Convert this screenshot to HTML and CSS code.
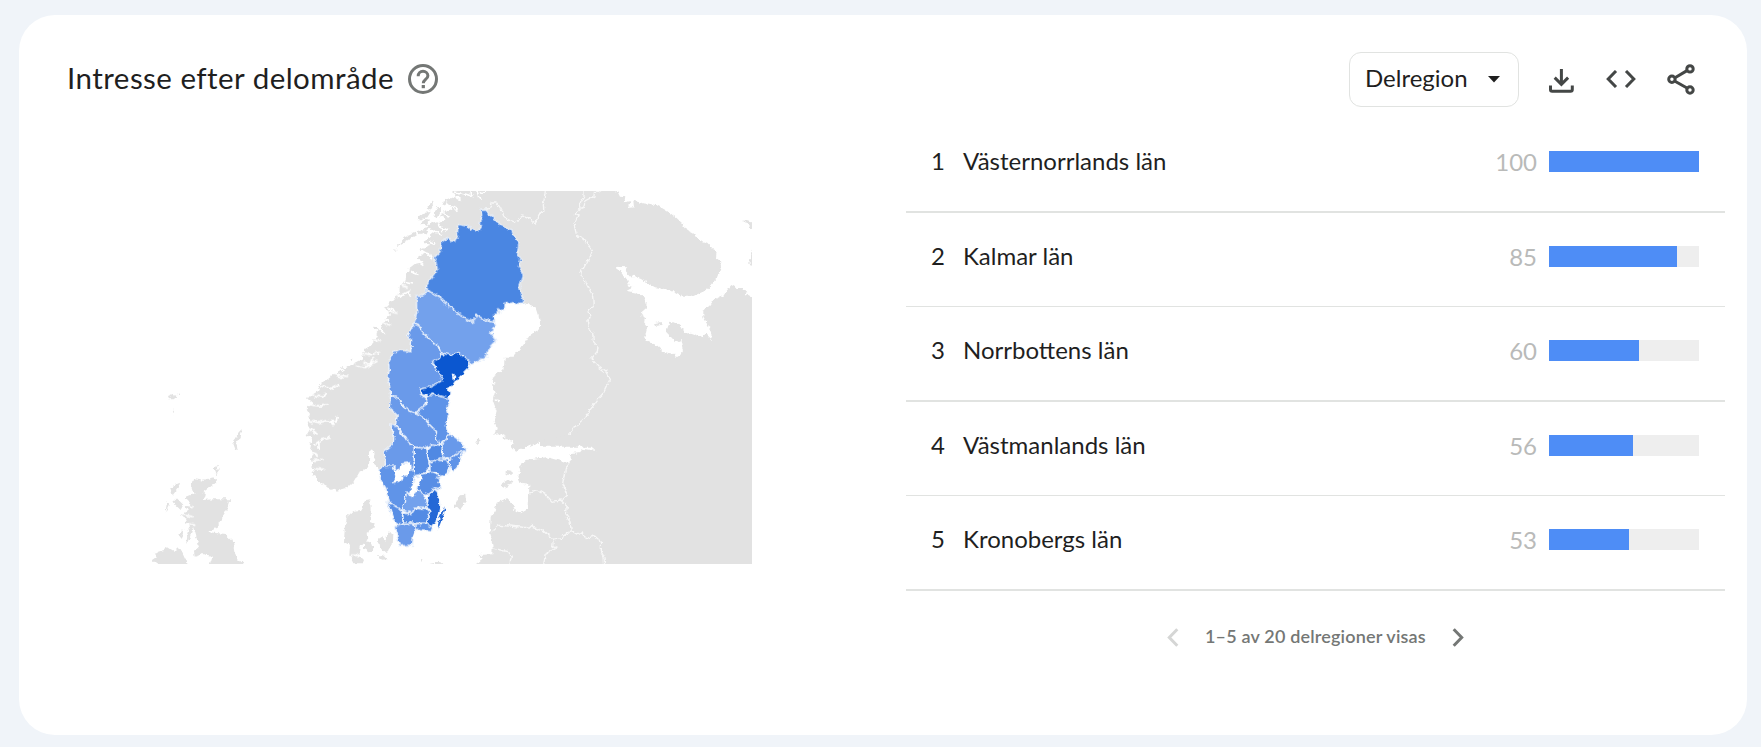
FILE: index.html
```html
<!DOCTYPE html>
<html lang="sv">
<head>
<meta charset="utf-8">
<title>Intresse efter delområde</title>
<link rel="stylesheet" href="styles.css">
</head>
<body>
<main class="card">
  <header class="header">
    <h1 class="title">Intresse efter delområde</h1>
    <svg class="help" viewBox="0 0 30 30"><circle cx="15" cy="15" r="13.5" fill="none" stroke="#747775" stroke-width="3"/><path d="M10.2 12.2C10.2 8.9 12.4 7.3 15 7.3s4.9 1.8 4.9 4.4c0 3.6-4.6 3.9-4.6 7.5" fill="none" stroke="#747775" stroke-width="3"/><rect x="13.7" y="21" width="3.2" height="3.2" fill="#747775"/></svg>
    <div class="select"><span class="select-text">Delregion</span><svg class="caret" viewBox="0 0 12 7"><path d="M0 0H12L6 6.5Z" fill="#1f1f1f"/></svg></div>
    <svg class="download" viewBox="0 0 25 25"><path d="M12.4 0V15M5.7 8.6L12.4 15.3L19.1 8.6M1.5 16.5V20.5Q1.5 22.2 3.2 22.2H21.6Q23.3 22.2 23.3 20.5V16.5" fill="none" stroke="#444746" stroke-width="3"/></svg>
    <svg class="code" viewBox="0 0 30 18"><path d="M10 1L2.2 9L10 17M20 1L27.8 9L20 17" fill="none" stroke="#444746" stroke-width="3"/></svg>
    <svg class="share" viewBox="0 0 28 31"><g fill="none" stroke="#444746" stroke-width="3"><path d="M8 13.8L20 6.6M8 17.2L20 24"/><circle cx="4.9" cy="15.3" r="3.2"/><circle cx="23" cy="4.9" r="3.2"/><circle cx="23" cy="26" r="3.2"/></g></svg>
  </header>
  <div class="content">
    <div class="map-pane">
      <svg class="map" viewBox="150 190 604 376">
        <defs>
          <clipPath id="frame"><rect x="150" y="191.5" width="601.6" height="371.8"/></clipPath>
          <filter id="coast" x="-5%" y="-5%" width="110%" height="110%" color-interpolation-filters="sRGB"><feTurbulence type="fractalNoise" baseFrequency=".22" numOctaves="3" seed="4"/><feDisplacementMap in="SourceGraphic" scale="5" xChannelSelector="R" yChannelSelector="G"/></filter>
        </defs>
        <g clip-path="url(#frame)"><g filter="url(#coast)"><g transform="scale(.33333)">
          <!-- mainland and islands -->
          <g fill="#e2e2e2">
            <g transform="translate(1140 540)">
              <path d="M215 0L215 36 232 46 200 58 203 72 218 88 196 92 180 108 197 118 172 132 158 122 143 142 168 152 148 168 132 188 152 194 120 206 136 218 108 236 132 246 104 252 84 268 94 284 74 304 64 332 48 346 58 356 34 364 20 384 30 402 14 422 8 440 -10 455V610H60V560L150 400 400 340 435 370 470 385 475 400 482 445 450 465 430 495 385 550 350 610H705V0Z"/>
              <path d="M160 60L162 80 146 92 140 84ZM135 98L152 96 142 112 125 118 108 118ZM45 213L60 184 74 172 92 164 104 158 110 164 84 180 62 192ZM110 154L130 148 152 136 140 160 116 166ZM172 82L184 80 178 104 166 116 160 104ZM190 62L202 58 194 80 184 76ZM118 130L134 120 150 122 140 138Z"/>
            </g>
            <g transform="translate(870 540)"><path d="M400 250L384 262 362 262 346 290 350 306 330 314 328 340 312 352 318 376 298 392 304 416 280 428 270 450 272 466 250 476 250 492 226 506 216 518 220 536 190 552 176 562 192 570 152 584 130 594 120 606 100 640H360V400Z"/><path d="M284 384L294 378 290 388ZM252 440L266 442 256 450ZM182 538L188 536 184 548ZM150 562L160 558 156 568ZM312 212L318 210 314 216Z"/></g>
            <g transform="translate(420 1110)">
              <path d="M630 -15L600 6 572 18 552 34 534 46 540 60 516 74 504 88 518 100 500 116 510 132 500 160 510 178 500 194 516 206 508 228 520 244 510 266 520 280 516 296 522 318 538 338 560 350 590 362 620 354 640 336 656 308 682 294 690 280 686 246 696 238 704 262 700 280 714 292 728 308 737 290 800 200 780 -15Z"/>
              <path d="M620 440L642 422 660 420 678 390 691 388 692 430 690 456 704 462 700 478 680 488 682 510 662 530 658 556 672 570 668 580 640 580 628 556 630 524 612 514 614 474ZM672 514L692 516 700 540 688 548 672 538ZM714 508L730 498 734 516 746 484 760 492 758 524 744 536 738 550 718 532ZM708 556L732 556 746 570 726 572Z"/>
              <path d="M162 328L190 332 228 324 226 340 190 366 198 374 188 390 224 388 270 388 268 406 252 436 236 456 236 472 204 486 232 490 256 492 278 512 284 548 296 570 310 580V620H210V578L216 558 190 552 164 560 162 546 176 526 166 490 160 470 142 480 152 458 130 462 140 446 120 436 144 424 134 406 150 404 136 382 166 370 152 360ZM50 620L56 584 36 570 50 560 44 548 72 540 84 532 100 542 120 534 130 552 142 578V620ZM92 358L106 344 120 338 116 352 98 376ZM100 392L110 384 118 392 130 404 122 420 106 404ZM82 390L88 404 76 428ZM154 456L164 454 150 500 138 526 142 498ZM112 496L130 480 122 510ZM276 216L290 198 300 182 306 178 302 202 288 212 292 236 286 242ZM220 292L234 284 228 300 240 296 226 316ZM84 78L98 72 110 78 98 88 88 88ZM98 116L102 122 101 134ZM112 72L120 70 116 76Z"/>
            </g>
            <path transform="translate(1620 540)" d="M0 0H190L190 34 232 34 240 50 256 52 254 64 274 60 262 84 282 82 280 62 310 70 330 72 350 76 366 84 386 96 410 114 425 128 440 150 460 160 482 182 502 188 520 208 530 212 528 234 540 242 543 262 530 295 515 315 496 332 455 350 430 350 390 330 345 322 322 308 300 294 278 286 280 298 254 270 262 262 222 260 240 274 256 296 268 306 262 316 280 322 260 332 290 338 310 350 320 370 316 392 302 404 316 414 312 426 322 440 316 468 320 482 340 490 370 516 395 520 410 533 432 515 425 480 408 487 378 455 390 425 410 430 422 442 432 446 428 462 450 458 490 472 494 458 515 478 514 460 505 436 490 410 490 390 508 378 520 360 550 348 562 330 574 315 590 324 610 324 622 336 612 352 624 344 650 360V800H0ZM610 120L650 132V156L624 136ZM650 180L634 222 628 252 650 258ZM345 430L362 426 366 434 350 438Z"/>
            <g transform="translate(1380 1110)">
              <path d="M135 -40L130 0 108 12 95 40 104 70 98 90 112 128 104 150 110 176 102 194 116 190 130 208 142 204 150 216 160 212 156 232 165 242 200 232 240 215 290 204 320 196 336 196 352 184 354 208 368 222 394 222 406 242 366 236 356 250 332 252 332 275 304 274 262 262 220 266 200 270 176 290 182 300 175 320 184 342 208 344 206 416 182 430 164 422 158 402 142 384 110 398 104 424 92 440 90 480 98 530 97 553 55 555 68 566 48 582V620H920V-40ZM140 300L154 302 156 314 140 314ZM122 342L146 328 160 334 152 344 128 354ZM46 214L54 206 62 214 52 222Z"/>
              <path d="M0 376L16 374 18 392 0 416-18 410-12 390ZM-150 600L-125 588-60 576-42 590-48 620H-150ZM-120 568L-112 572-118 576Z"/>
            </g>
          </g>
          <!-- fjords and inlets -->
          <g fill="none" stroke="#fff" stroke-width="5">
            <path transform="translate(1140 540)" d="M225 36L255 42 282 50M270 30L272 46M290 30L296 48 306 58M320 30L300 40M214 50L242 58M196 74L226 84 232 92M180 98L210 108M176 130L188 152 204 144M160 150L186 166M150 184L166 190M126 216L148 222 156 240M112 240L130 254M92 274L112 282M70 306L96 312M52 350L86 338 92 350M22 384L44 392M12 420L30 424M0 448L14 462"/>
            <path transform="translate(870 540)" d="M330 314L350 322M316 350L346 340 364 332M298 394L322 400M280 430L300 436M250 480L274 484M216 520L246 524 270 514M196 556L226 562 262 540M150 584L174 590M220 550L240 552 248 534"/>
            <path transform="translate(420 1110)" d="M580 12L610 24M540 46L572 58 600 42M516 74L548 82 560 66M510 104L540 108 566 104M500 150L538 158 558 152 588 156 592 138M572 152L580 168M510 176L530 190M520 226L544 210 572 200M536 214L538 240M512 246L534 256M514 272L548 268M520 296L550 298M690 284L690 252M130 402L158 410M124 434L158 440M138 462L166 466M632 556L660 556 672 558"/>
            <path transform="translate(1380 1110)" stroke-width="4" d="M95 40L106 42M104 90L118 92M116 200L136 198M145 212L160 222"/>
          </g>
          <!-- national borders -->
          <g fill="none" stroke="#f7f7f7" stroke-width="4">
            <path transform="translate(1140 540)" d="M303 88L328 86 334 66 348 66 360 82 376 114 404 126 428 108 450 118 464 132 474 118 476 102 492 96 490 76 496 30"/>
            <path transform="translate(1620 540)" d="M132 30L132 46 118 70 120 86 104 100 114 106 102 134 110 166 134 178 158 214 122 280 158 346 160 380 146 388 150 412 142 430 148 452 158 458 160 484 174 500 172 514 154 536 178 562 198 576 210 598 190 640 175 655 132 716 110 735 85 764M120 86L130 82 136 62 162 48 164 30M166 30L178 38 190 30"/>
            <path transform="translate(1380 1110)" d="M332 276L316 296 308 340 322 376 304 392 322 410 318 436 330 452 334 482 304 502 280 508 248 482 224 474 220 462 208 474 150 468 118 466 96 486M206 370L234 360 258 374 276 394 304 390M334 482L350 492 366 488 376 506 404 498 424 516 424 546 432 560 434 590M280 508L278 530 290 534 256 550 250 590M98 534L146 546 154 560 148 590"/>
          </g>
          <!-- counties -->
          <g stroke="#ebf2fc" stroke-width="4" stroke-linejoin="round">
            <g transform="translate(1140 540)">
              <path fill="#73a1ec" d="M140 328L128 345 109 346 110 400 102 432 122 440 125 455 150 480 175 500 182 520 215 525 235 518 262 540 270 557 290 545 318 530 325 505 348 482 332 460 345 440 340 425 318 422 290 405 278 427 240 405 215 382 190 365 180 352 150 335Z"/>
              <path fill="#4a86e2" d="M303 88H320L325 100 365 137 395 150 405 175 417 187 412 230 423 236 418 260 430 288 420 320 425 345 433 368 410 372 400 365 375 370 375 385 355 390 360 400 340 405 345 427 318 422 290 405 278 427 240 405 215 382 190 365 180 352 150 335 140 325V312L172 268 163 232 180 215 184 188 204 175 223 186 232 165 233 133 260 138 295 152 304 140 297 130 308 105Z"/>
            </g>
            <g transform="translate(1080 1080)">
              <path fill="#6a9aea" d="M162-108L142-70 155-60 152-25 120-30 100-22 85 5 88 30 82 60 88 70 92 104 115 115 130 140 155 155 165 160 195 135 200 115 182 103 178 88 215 80 250 60 245 45 230 30 218 10 240-5 242-20 235-40 210-60 185-85 182-100Z"/>
              <path fill="#0b57d0" stroke-width="3" d="M242-20L275-15 295-22 322 0 330 15 325 25 310 40 290 60 280 75 265 85 272 105 265 115 240 110 220 103 205 108 190 108 178 88 215 80 250 60 240 45 228 25 222 8 215 5 240-5Z"/>
              <path fill="#6a9aea" d="M92 104L115 115 130 140 155 155 180 157 205 190 230 215 228 235 245 248 235 258 215 255 190 265 165 262 140 240 125 215 107 195 112 165 88 145Z"/>
              <path fill="#5e93e8" d="M200 105L220 103 265 115 270 125 260 150 265 170 258 190 262 215 270 222 245 250 225 235 230 215 205 190 200 180 168 158 200 135Z"/>
              <path fill="#6a9aea" d="M92 195L107 198 140 240 163 262V350H105V318H77L72 275 100 250 102 225Z"/>
              <path fill="#6899ea" d="M245 252L270 222 290 235 305 250 318 270 305 280 285 285 268 300 248 290Z"/>
              <path fill="#5e93e8" d="M318 270L300 290 298 315 280 335 268 320 268 300 285 285Z"/>
              <path fill="#5089e3" d="M200 270L215 255 235 258 245 252 248 290 265 300 240 298 210 308 205 300Z"/>
              <path fill="#588ee5" d="M163 262L200 265 205 300 210 320 195 340 180 348 163 350Z"/>
              <path fill="#568de5" d="M210 310L240 298 265 300 270 320 265 340 240 350 225 335 210 335Z"/>
              <path fill="#588ee5" d="M180 348L195 342 215 335 240 350 235 365 245 375 235 390 220 385 215 410 190 400 172 390Z"/>
              <path fill="#6094e8" d="M56 330L60 325 77 318H100L105 335 163 325V350L158 385 155 400 140 400 138 425 125 450 100 435 85 425 80 400 78 385 62 360Z"/>
              <path fill="#73a1ec" d="M140 400L155 408 172 390 190 400 195 410 205 430 200 445 165 445 155 460 125 450Z"/>
              <path fill="#2468d6" d="M205 410L220 388 236 395 240 440 232 480 218 500 195 490 210 455 200 440Z"/>
              <path fill="#2468d6" stroke="none" d="M257 436L254 456 246 478 233 510 236 480 246 458Z"/>
              <path fill="#538be4" d="M128 460L155 460 165 445 200 448 210 458 198 490 150 490 130 490Z"/>
              <path fill="#588ee5" d="M80 425L100 435 125 450 130 490 115 492 100 480 90 450Z"/>
              <path fill="#6a9aea" d="M103 500L130 490 160 490 168 510 160 530 158 555 118 558 112 530Z"/>
              <path fill="#5e93e8" d="M165 492L200 490 218 500 215 512 165 508Z"/>
              <path fill="#fff" stroke="none" d="M122 310L150 306 152 320 146 346 128 350 122 364 95 370 106 350 102 328 118 330ZM186 344L183 364 170 384 160 414 152 408 152 384 168 354ZM148 154L160 152 162 162ZM226 350L246 356 242 362ZM278 38L286 50 282 64Z"/>
            </g>
          </g>
        </g></g></g>
      </svg>
    </div>
    <div class="ranking">
      <ol class="rows">
        <li class="row"><span class="rank">1</span><span class="name">Västernorrlands län</span><span class="value">100</span><span class="track"><span class="bar" style="width:100%"></span></span></li>
        <li class="row"><span class="rank">2</span><span class="name">Kalmar län</span><span class="value">85</span><span class="track"><span class="bar" style="width:85%"></span></span></li>
        <li class="row"><span class="rank">3</span><span class="name">Norrbottens län</span><span class="value">60</span><span class="track"><span class="bar" style="width:60%"></span></span></li>
        <li class="row"><span class="rank">4</span><span class="name">Västmanlands län</span><span class="value">56</span><span class="track"><span class="bar" style="width:56%"></span></span></li>
        <li class="row"><span class="rank">5</span><span class="name">Kronobergs län</span><span class="value">53</span><span class="track"><span class="bar" style="width:53%"></span></span></li>
      </ol>
      <nav class="pager">
        <svg class="chevron" viewBox="0 0 12 19"><path d="M10.3 1.2L2.3 9.5L10.3 17.8" fill="none" stroke="#d5d6d5" stroke-width="3"/></svg>
        <span class="pager-text">1–5 av 20 delregioner visas</span>
        <svg class="chevron" viewBox="0 0 12 19"><path d="M1.7 1.2L9.7 9.5L1.7 17.8" fill="none" stroke="#747775" stroke-width="3"/></svg>
      </nav>
    </div>
  </div>
</main>
</body>
</html>
```
FILE: styles.css
```css
* { box-sizing: border-box; }
body { margin: 0; padding: 15px 14px 0 19px; height: 747px; background: #f0f4f9; font-family: "Google Sans", Lato, sans-serif; color: #1f1f1f; overflow: hidden; }
svg { display: block; flex: none; }
.card { height: 720px; background: #fff; border-radius: 36px; }
.header { display: flex; align-items: center; height: 117px; padding: 11px 52px 0 48px; }
.title { margin: 0; padding-bottom: 2px; width: 324px; font-size: 29.5px; line-height: 36px; font-weight: 400; letter-spacing: .46px; white-space: nowrap; }
.help { width: 30px; height: 30px; margin-left: 17px; }
.select { display: flex; align-items: center; justify-content: space-between; width: 170px; height: 55px; margin-left: auto; padding: 0 18px 0 15px; border: 1px solid #e1e3e1; border-radius: 12px; font-size: 24px; }
.select-text { padding-bottom: 3px; }
.caret { width: 12px; height: 7px; }
.download { width: 25px; height: 25px; margin: 4px 0 0 30px; }
.code { width: 30px; height: 18px; margin-left: 32px; }
.share { width: 28px; height: 31px; margin-left: 31px; }
.content { display: flex; }
.map-pane { width: 887px; padding: 58px 0 0 131px; }
.map { width: 604px; height: 376px; }
.ranking { width: 819px; }
.rows { margin: 0; padding: 0; list-style: none; }
.row { display: flex; align-items: flex-start; height: 94px; padding: 33px 26px 0 25px; border-bottom: 1px solid #e1e3e1; font-size: 24px; line-height: 19px; }
.row:nth-child(odd) { height: 95px; border-bottom-width: 2px; }
.row:first-child { height: 81px; padding-top: 19px; }
.rank { width: 32px; }
.name { flex: 1; white-space: nowrap; }
.value { width: 60px; margin-right: 12px; padding-top: 1px; text-align: right; color: #b9bab9; }
.track { width: 150px; height: 21px; background: #eee; }
.bar { display: block; height: 21px; background: #4e8df6; }
.pager { display: flex; align-items: center; height: 92px; padding-left: 261px; color: #747775; font-size: 18px; font-weight: 600; }
.pager-text { width: 221px; margin: 0 26px 0 26px; padding-bottom: 2px; letter-spacing: .17px; white-space: nowrap; }
.chevron { width: 12px; height: 19px; }
```
